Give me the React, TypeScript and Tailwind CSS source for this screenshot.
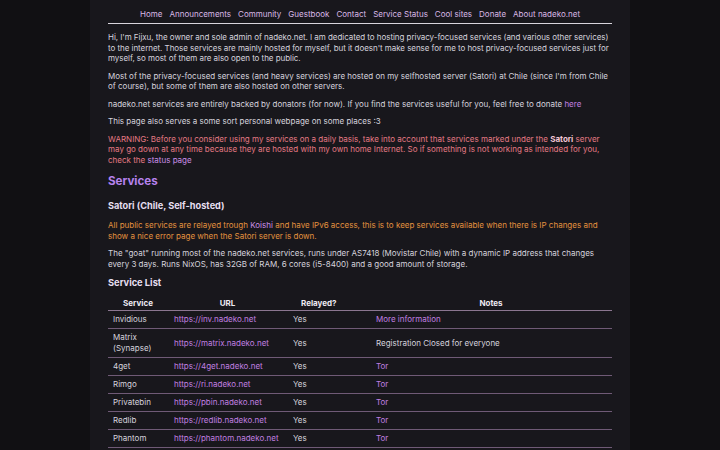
const nav = [
  "Home",
  "Announcements",
  "Community",
  "Guestbook",
  "Contact",
  "Service Status",
  "Cool sites",
  "Donate",
  "About nadeko.net",
];

const services = [
  { name: "Invidious", url: "https://inv.nadeko.net", relayed: "Yes", notes: "More information", link: true },
  { name: "Matrix (Synapse)", url: "https://matrix.nadeko.net", relayed: "Yes", notes: "Registration Closed for everyone", link: false },
  { name: "4get", url: "https://4get.nadeko.net", relayed: "Yes", notes: "Tor", link: true },
  { name: "Rimgo", url: "https://ri.nadeko.net", relayed: "Yes", notes: "Tor", link: true },
  { name: "Privatebin", url: "https://pbin.nadeko.net", relayed: "Yes", notes: "Tor", link: true },
  { name: "Redlib", url: "https://redlib.nadeko.net", relayed: "Yes", notes: "Tor", link: true },
  { name: "Phantom", url: "https://phantom.nadeko.net", relayed: "Yes", notes: "Tor", link: true },
];

export default function App() {
  return (
    <div
      className="min-h-screen bg-[#111013] text-[#d6d3dc]"
      style={{ fontFamily: "Inter, 'Noto Sans', sans-serif" }}
    >
      <div className="mx-auto w-[540px] min-h-screen bg-[#18171c] px-[18px] text-[8px] leading-[10.5px]">
        <nav className="flex justify-center gap-[7px] whitespace-nowrap border-b border-[#d8d4dc] pt-[9px] pb-[3.5px] text-[8px] text-[#d9b9e6]">
          {nav.map((n) => (
            <a key={n} href="#">{n}</a>
          ))}
        </nav>

        <p className="mt-[8px] tracking-[-0.05px]">
          Hi, I'm Fijxu, the owner and sole admin of nadeko.net. I am dedicated to hosting privacy-focused services (and various other services) to the internet. Those services are mainly hosted for myself, but it doesn't make sense for me to host privacy-focused services just for myself, so most of them are also open to the public.
        </p>
        <p className="mt-[7px]">
          Most of the privacy-focused services (and heavy services) are hosted on my selfhosted server (Satori) at Chile (since I'm from Chile of course), but some of them are also hosted on other servers.
        </p>
        <p className="mt-[7px]">
          nadeko.net services are entirely backed by donators (for now). If you find the services useful for you, feel free to donate{" "}
          <a href="#" className="text-[#c07fe0]">here</a>
        </p>
        <p className="mt-[7px]">This page also serves a some sort personal webpage on some places :3</p>
        <p className="mt-[7px] text-[#e57a84]">
          WARNING: Before you consider using my services on a daily basis, take into account that services marked under the{" "}
          <b className="text-[#f3c6d4]">Satori</b> server may go down at any time because they are hosted with my own home Internet. So if something is not working as intended for you, check the{" "}
          <a href="#" className="text-[#c98ee6]">status page</a>
        </p>

        <h2 className="mt-[9px] text-[11.6px] leading-[14px] font-bold text-[#b682ee]">Services</h2>
        <h3 className="mt-[12px] text-[9.2px] leading-[12px] font-bold text-[#e6dff0]">Satori (Chile, Self-hosted)</h3>

        <p className="mt-[8px] text-[#e3923f]">
          All public services are relayed trough <a href="#" className="text-[#c98ee6]">Koishi</a> and have IPv6 access, this is to keep services available when there is IP changes and show a nice error page when the Satori server is down.
        </p>
        <p className="mt-[7px]">
          The "goat" running most of the nadeko.net services, runs under AS7418 (Movistar Chile) with a dynamic IP address that changes every 3 days. Runs NixOS, has 32GB of RAM, 6 cores (i5-8400) and a good amount of storage.
        </p>

        <h4 className="mt-[8px] text-[9.3px] leading-[12px] font-bold text-[#e6dff0]">Service List</h4>

        <table className="mt-[9px] w-full border-collapse">
          <thead>
            <tr className="border-b border-[#8b7690]">
              <th className="w-[60px] pb-[1.5px] font-bold text-[#eeeaf2]">Service</th>
              <th className="w-[119px] pb-[1.5px] font-bold text-[#eeeaf2]">URL</th>
              <th className="w-[83px] pb-[1.5px] pl-[14px] text-left font-bold text-[#eeeaf2]">Relayed?</th>
              <th className="pb-[1.5px] font-bold text-[#eeeaf2]">Notes</th>
            </tr>
          </thead>
          <tbody>
            {services.map((s) => (
              <tr key={s.name} className="border-b border-[#6f5a76]">
                <td className="py-[3.25px] pl-[5px]">{s.name}</td>
                <td className="py-[3.25px] pl-[6px] text-[#c07fe0]">{s.url}</td>
                <td className="py-[3.25px] pl-[6px]">{s.relayed}</td>
                <td className={`py-[3.25px] pl-[6px] ${s.link ? "text-[#c07fe0]" : ""}`}>{s.notes}</td>
              </tr>
            ))}
          </tbody>
        </table>
      </div>
    </div>
  );
}
